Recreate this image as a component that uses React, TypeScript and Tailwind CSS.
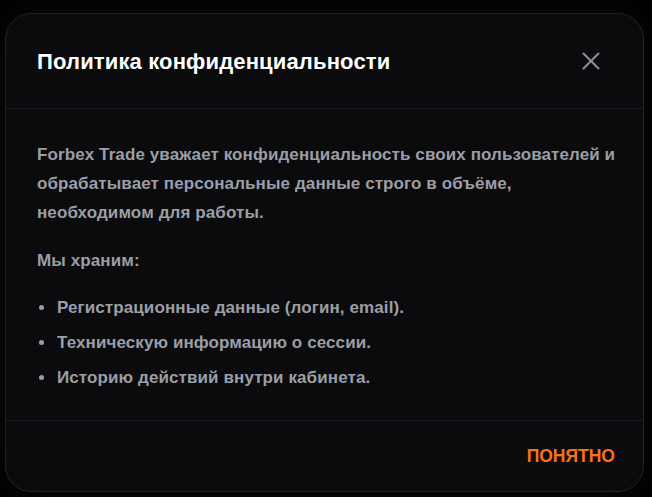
import { X } from "lucide-react";

const items = [
  "Регистрационные данные (логин, email).",
  "Техническую информацию о сессии.",
  "Историю действий внутри кабинета.",
];

export default function App() {
  return (
    <div className="min-h-[497px] w-[652px] bg-black pt-[13px] pl-[5px] font-['Liberation_Sans',sans-serif]">
      <div className="flex h-[479px] w-[639px] flex-col rounded-[26px] border border-[#222226] bg-[#0b0b0d] shadow-[0_0_40px_rgba(255,255,255,0.04)]">
        {/* Header */}
        <div className="flex h-[95px] shrink-0 items-center justify-between border-b border-[#1c1c20] pl-[31px] pr-[37px]">
          <h2 className="text-[22px] font-bold tracking-[0.15px] text-white">Политика конфиденциальности</h2>
          <button className="text-[#8e919a]">
            <X size={30} strokeWidth={1.6} />
          </button>
        </div>

        {/* Body */}
        <div className="flex-1 pl-[31px] pr-[24px] pt-[31px] text-[17px] font-bold leading-[29px] tracking-[0.1px] text-[#9b9ea6]">
          <p>
            Forbex Trade уважает конфиденциальность своих пользователей и
            обрабатывает персональные данные строго в объёме, необходимом для работы.
          </p>
          <p className="mt-[19px]">Мы храним:</p>
          <ul className="mt-[18px] flex flex-col gap-[6px]">
            {items.map((t) => (
              <li key={t} className="flex items-center">
                <span className="mr-[13px] ml-[2px] h-[5px] w-[5px] rounded-full bg-[#9b9ea6]" />
                {t}
              </li>
            ))}
          </ul>
        </div>

        {/* Footer */}
        <div className="flex h-[71px] shrink-0 items-center justify-end border-t border-[#1c1c20] pr-[28px]">
          <button className="text-[17.5px] font-bold uppercase text-[#f97316]">Понятно</button>
        </div>
      </div>
    </div>
  );
}
